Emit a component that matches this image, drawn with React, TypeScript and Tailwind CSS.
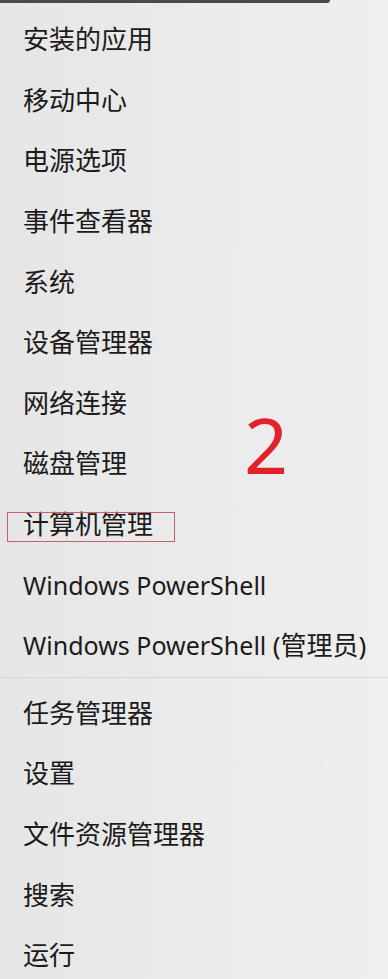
const topItems = [
  "安装的应用",
  "移动中心",
  "电源选项",
  "事件查看器",
  "系统",
  "设备管理器",
  "网络连接",
  "磁盘管理",
  "计算机管理",
  "Windows PowerShell",
  "Windows PowerShell (管理员)",
];

const bottomItems = ["任务管理器", "设置", "文件资源管理器", "搜索", "运行"];

const font = {
  fontFamily: '"Noto Sans", "Noto Sans CJK SC", sans-serif',
};

function Item({ label }: { label: string }) {
  // latin words render a bit smaller than the CJK glyphs
  const parts = label.split(/(\(管理员\))/).filter(Boolean);
  return (
    <div className="h-[60.6px] flex items-center pl-[23px] text-[26px] text-[#1b1b1b] leading-none whitespace-pre">
      <span>
        {parts.map((p, i) =>
          /[A-Za-z]/.test(p) ? (
            <span key={i} className="text-[25px]">
              {p}
            </span>
          ) : (
            <span key={i}>{p}</span>
          )
        )}
      </span>
    </div>
  );
}

export default function App() {
  return (
    <div
      className="relative w-[388px] h-[979px] overflow-hidden bg-gradient-to-r from-[#e6e6e6] to-[#efefef]"
      style={font}
    >
      <div className="h-[3px] w-[330px] bg-[#4a4a4a] rounded-br-sm" />
      <div className="pt-[6px]">
        {topItems.map((t) => (
          <Item key={t} label={t} />
        ))}
      </div>
      <div className="mt-[1px] h-px bg-[#d6d6d6]" />
      <div className="pt-[5px]">
        {bottomItems.map((t) => (
          <Item key={t} label={t} />
        ))}
      </div>

      {/* annotation overlays */}
      <div className="absolute left-[7px] top-[512px] w-[168px] h-[30px] border border-[#c8606a]" />
      <div className="absolute left-[244px] top-[406px] text-[77px] leading-none text-[#e3212b]">
        2
      </div>
    </div>
  );
}
